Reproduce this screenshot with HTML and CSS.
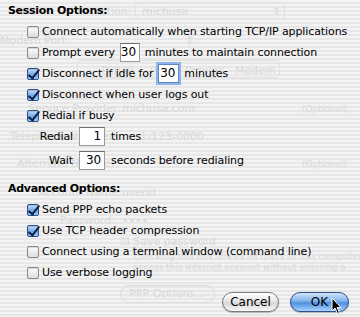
FILE: index.html
```html
<!DOCTYPE html>
<html lang="en">
<head>
  <meta charset="UTF-8" />
  <title>Session Options</title>
  <link rel="stylesheet" href="styles.css">
</head>
<body>
  <!-- faded window content behind the sheet -->
  <div class="ghost">
    <span class="g" style="left:100px;top:5px">ation:</span>
    <span class="g-box" style="left:135px;top:2px;width:150px;height:17px"></span>
    <span class="g" style="left:142px;top:5px">michusa</span>
    <span class="g" style="left:272px;top:5px">&#8661;</span>
    <span class="g" style="left:0;top:34px">Modem Port</span>
    <span class="g" style="left:185px;top:34px">&#8661;</span>
    <span class="g-box" style="left:77px;top:60px;width:203px;height:18px"></span>
    <span class="g" style="left:100px;top:64px">TCP/IP</span>
    <span class="g" style="left:150px;top:64px">PPP</span>
    <span class="g" style="left:185px;top:64px">Proxies</span>
    <span class="g" style="left:235px;top:64px">Modem</span>
    <span class="g" style="left:28px;top:102px">Service Provider:</span>
    <span class="g" style="left:122px;top:102px">michusa.com</span>
    <span class="g small" style="left:302px;top:104px">(Optional)</span>
    <span class="g" style="left:10px;top:130px">Telephone Number:</span>
    <span class="g" style="left:140px;top:130px">1-123-0000</span>
    <span class="g" style="left:17px;top:157px">Alternate Number:</span>
    <span class="g small" style="left:302px;top:159px">(Optional)</span>
    <span class="g" style="left:38px;top:186px">Account Name:</span>
    <span class="g" style="left:122px;top:186px">userid</span>
    <span class="g" style="left:60px;top:214px">Password:</span>
    <span class="g" style="left:122px;top:214px">&bull;&bull;&bull;&bull;</span>
    <span class="g" style="left:120px;top:235px">&#9745; Save password</span>
    <span class="g small" style="left:133px;top:251px">Checking this box allows all users of this computer</span>
    <span class="g small" style="left:133px;top:262px">access this Internet account without entering a</span>
    <span class="g-btn" style="left:120px;top:285px">PPP Options...</span>
  </div>

  <main class="sheet">
    <h2 class="title">Session Options:</h2>

    <label class="row">
      <span class="box"></span>
      Connect automatically when starting TCP/IP applications
    </label>
    <label class="row">
      <span class="box"></span>
      Prompt every <span class="field f-20">30</span> minutes to maintain connection
    </label>
    <label class="row">
      <span class="box checked"></span>
      Disconnect if idle for <span class="field f-20 focus">30</span> minutes
    </label>
    <label class="row">
      <span class="box checked"></span>
      Disconnect when user logs out
    </label>
    <label class="row">
      <span class="box checked"></span>
      Redial if busy
    </label>
    <div class="row sub">
      <span class="sub-label">Redial</span>
      <span class="field f-26">1</span>
      times
    </div>
    <div class="row sub wait">
      <span class="sub-label">Wait</span>
      <span class="field f-26">30</span>
      seconds before redialing
    </div>

    <h2 class="title advanced">Advanced Options:</h2>

    <label class="row">
      <span class="box checked"></span>
      Send PPP echo packets
    </label>
    <label class="row">
      <span class="box checked"></span>
      Use TCP header compression
    </label>
    <label class="row">
      <span class="box"></span>
      Connect using a terminal window (command line)
    </label>
    <label class="row">
      <span class="box"></span>
      Use verbose logging
    </label>

    <div class="buttons">
      <button class="btn">Cancel</button>
      <button class="btn default">OK</button>
    </div>
  </main>

  <svg class="cursor" width="12" height="18" viewBox="0 0 12 18">
    <path d="M1 1 L1 14 L4 11 L6.5 16.5 L8.5 15.5 L6 10.5 L10 10.5 Z" fill="#000" stroke="#fff" stroke-width="1"/>
  </svg>
</body>
</html>
```

FILE: styles.css
```css
* {
  margin: 0;
  padding: 0;
  box-sizing: border-box;
}

body {
  width: 360px;
  height: 317px;
  overflow: hidden;
  position: relative;
  font-family: 'DejaVu Sans', sans-serif;
  font-size: 11px;
  color: #000;
  background: repeating-linear-gradient(
    to bottom,
    #f3f3f3 0,
    #f3f3f3 2px,
    #e7e7e7 2px,
    #e7e7e7 4px
  );
}

/* ghosted window behind the sheet */
.ghost {
  position: absolute;
  inset: 0;
  color: #d9d9d9;
}

.g {
  position: absolute;
  white-space: nowrap;
  font-size: 11px;
}

.g.small {
  font-size: 9px;
}

.g-box {
  position: absolute;
  border: 1px solid #e0e0e0;
  border-radius: 4px;
}

.g-btn {
  position: absolute;
  width: 95px;
  height: 18px;
  border: 1px solid #dcdcdc;
  border-radius: 9px;
  text-align: center;
  line-height: 16px;
  font-size: 11px;
}

.sheet {
  position: relative;
  padding: 0 8px;
}

.title {
  font-size: 11px;
  font-weight: bold;
  height: 21px;
  line-height: 21px;
  letter-spacing: -0.3px;
}

.title.advanced {
  margin-top: 7px;
}

.row {
  display: flex;
  align-items: center;
  height: 21px;
  padding-left: 19px;
  white-space: nowrap;
  gap: 3px;
  letter-spacing: -0.1px;
}

.box {
  width: 12px;
  height: 12px;
  border: 1px solid #8a8a8a;
  border-radius: 2px;
  background: linear-gradient(#fdfdfd, #dcdcdc);
  box-shadow: inset 0 1px 1px rgba(0, 0, 0, 0.15);
  position: relative;
  flex-shrink: 0;
}

.box.checked {
  border-color: #2c4f86;
  background: linear-gradient(#c9e1fb, #6ea8e8 55%, #9ccaf6);
}

.box.checked::after {
  content: '';
  position: absolute;
  left: 3px;
  top: -2px;
  width: 4px;
  height: 10px;
  border-right: 2.5px solid #0c1c44;
  border-bottom: 2.5px solid #0c1c44;
  transform: rotate(38deg);
}

.field {
  display: inline-block;
  height: 19px;
  line-height: 17px;
  font-size: 12px;
  background: #fff;
  border: 1px solid #9a9a9a;
  border-top-color: #6e6e6e;
  text-align: right;
  padding-right: 3px;
  margin: 0 2px;
}

.f-20 {
  width: 20px;
}

.f-26 {
  width: 26px;
  margin: 0 3px;
}

.field.focus {
  width: 21px;
  box-shadow: 0 0 0 2px #8db5ea;
  border-color: #5f87c4;
}

.sub-label {
  width: 46px;
  text-align: right;
}

.sub.wait {
  margin-top: 3px;
}

.buttons {
  display: flex;
  justify-content: flex-end;
  gap: 11px;
  margin-top: 9px;
  padding-right: 3px;
}

.btn {
  height: 20px;
  width: 57px;
  border-radius: 10px;
  border: 1px solid #7a7a7a;
  font-family: 'DejaVu Sans', sans-serif;
  font-size: 12px;
  color: #000;
  background: linear-gradient(#ffffff 0%, #e6e6e6 45%, #d6d6d6 55%, #f8f8f8 100%);
  box-shadow: 0 1px 1px rgba(0, 0, 0, 0.25);
}

.btn.default {
  width: 59px;
  border-color: #2c4f8c;
  background: linear-gradient(#cfe4fb 0%, #7fb2ec 45%, #4c8fe0 55%, #a8d4fb 100%);
}

.cursor {
  position: absolute;
  left: 331px;
  top: 297px;
}
```
